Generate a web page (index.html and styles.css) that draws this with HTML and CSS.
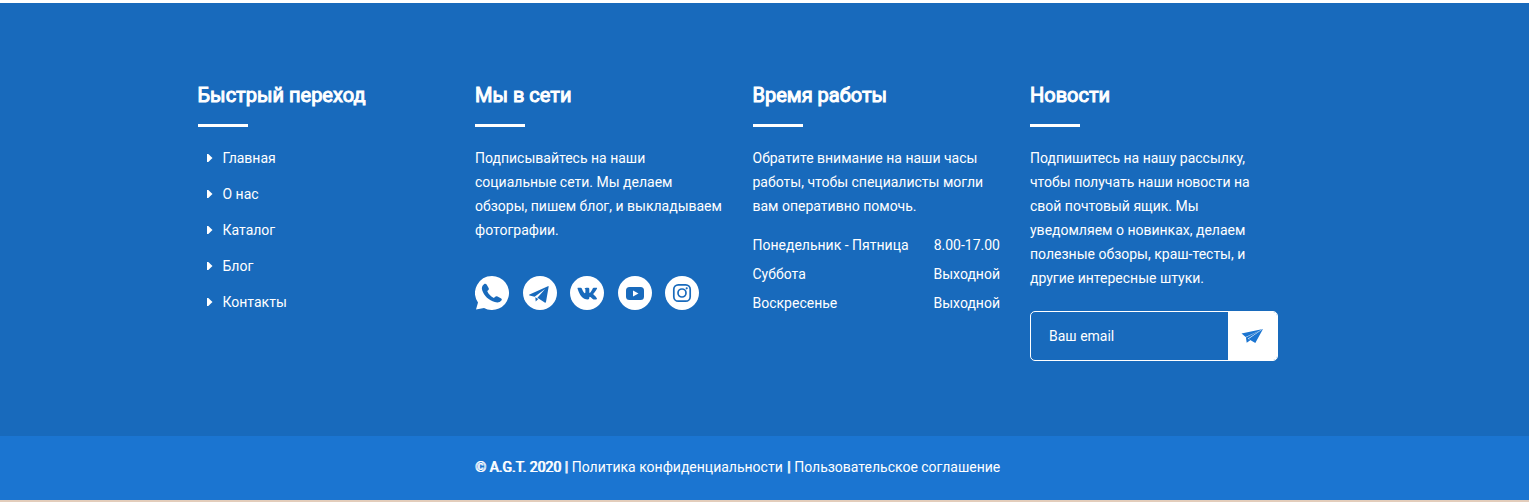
FILE: index.html
```html
<!DOCTYPE html>
<html lang="ru">
<head>
<meta charset="utf-8">
<title>A.G.T.</title>
<link rel="stylesheet" href="styles.css">
</head>
<body>
<footer class="footer">
  <div class="footer-main">
    <div class="columns">
      <section>
        <h2 class="title">Быстрый переход</h2>
        <ul class="links">
          <li><a href="#">Главная</a></li>
          <li><a href="#">О нас</a></li>
          <li><a href="#">Каталог</a></li>
          <li><a href="#">Блог</a></li>
          <li><a href="#">Контакты</a></li>
        </ul>
      </section>
      <section>
        <h2 class="title">Мы в сети</h2>
        <p class="text">Подписывайтесь на наши социальные сети. Мы делаем обзоры, пишем блог, и выкладываем фотографии.</p>
        <div class="social">
          <a href="#" aria-label="WhatsApp"><svg viewBox="0 0 34 34"><path fill="#fff" d="M17 0a17 17 0 1 1-8 32L1 33.500l2-7A17 17 0 0 1 17 0z"/><path fill="#186abc" d="M9 8.300c.9-.8 2-.6 2.600.3l2 3.300c.5.900.3 1.700-.4 2.300l-1 .9c1.200 3.100 3.600 5.500 6.700 7l1.300-1.300c.7-.7 1.500-.7 2.300-.3l3.300 1.700c1.100.6 1.300 1.500.6 2.400-1.500 1.900-3.800 2.300-6.600 1.500C14 24.500 9 20 7.200 14.300c-.7-2.400-.3-4.400 1.800-6z"/></svg></a>
          <a href="#" aria-label="Telegram"><svg viewBox="0 0 34 34"><circle cx="17" cy="17" r="17" fill="#fff"/><path fill="#186abc" d="M24.900 10.200 6.500 18.400c-.7.400-.6.800.1 1l5 1.300 10.500-7.600-7.700 8.600 7.300 4.800c.7.400 1.100.1 1.300-.6l2.600-15c.1-.8-.2-1-.7-.7zM12.300 21.300l.4 4.200 2.600-2.400z"/></svg></a>
          <a href="#" aria-label="ВКонтакте"><svg viewBox="0 0 34 34"><circle cx="17" cy="17" r="17" fill="#fff"/><path fill="#186abc" d="M8.200 11.700h2.600c.5 0 .8.300 1 .8 1 2.600 2.200 4.700 3 4.700.5 0 .6-.5.600-1.200v-2.200c0-.8-.4-1-.9-1.300.5-.7 1.400-.8 2.800-.8 1.600 0 2 .4 2 1.500v3c0 .7.300.9.700.6 1.100-.9 2-2.600 2.700-4.200.2-.6.500-.9 1.100-.9h2.500c.8 0 1 .4.600 1.100-.8 1.800-2.200 3.300-3.300 4.800-.4.500-.4.700.1 1.200 1.100 1 2.400 2.100 3.100 3.400.4.700.1 1.200-.7 1.200h-2.600c-.6 0-1-.3-1.400-.8l-1.300-1.300c-.9-.9-1.500-.8-1.500.4 0 1.200-.4 1.700-1.400 1.700-5.400 0-8.300-4.300-10.300-10.700-.2-.6 0-1 .6-1z"/></svg></a>
          <a href="#" aria-label="YouTube"><svg viewBox="0 0 34 34"><circle cx="17" cy="17" r="17" fill="#fff"/><rect x="8" y="11" width="18" height="13" rx="3.500" fill="#186abc"/><path fill="#fff" d="m15 14.500 5.500 3-5.500 3z"/></svg></a>
          <a href="#" aria-label="Instagram"><svg viewBox="0 0 34 34"><circle cx="17" cy="17" r="17" fill="#fff"/><g fill="none" stroke="#186abc" stroke-width="1.700"><rect x="8.800" y="8.800" width="16.400" height="16.400" rx="4.500"/><circle cx="17" cy="17" r="4"/></g><circle cx="21.700" cy="12.300" r="1.100" fill="#186abc"/></svg></a>
        </div>
      </section>
      <section>
        <h2 class="title">Время работы</h2>
        <p class="text">Обратите внимание на наши часы работы, чтобы специалисты могли вам оперативно помочь.</p>
        <table class="hours">
          <tr><th scope="row">Понедельник - Пятница</th><td>8.00-17.00</td></tr>
          <tr><th scope="row">Суббота</th><td>Выходной</td></tr>
          <tr><th scope="row">Воскресенье</th><td>Выходной</td></tr>
        </table>
      </section>
      <section>
        <h2 class="title">Новости</h2>
        <p class="text">Подпишитесь на нашу рассылку, чтобы получать наши новости на свой почтовый ящик. Мы уведомляем о новинках, делаем полезные обзоры, краш-тесты, и другие интересные штуки.</p>
        <form class="subscribe">
          <input type="email" placeholder="Ваш email" aria-label="Ваш email">
          <button type="button" aria-label="Подписаться"><svg viewBox="0 0 22 16"><path fill="#1b75d1" d="M22 1 .5 5.500l4.200 3.600zM22 1 7.500 11l6.800 4zM4.900 9.400l.8 5.400 3.600-2.600-2.600-1.400L20 2z"/></svg></button>
        </form>
      </section>
    </div>
  </div>
  <div class="footer-bottom">
    <b>© A.G.T. 2020 |</b>
    <a href="#">Политика конфиденциальности</a>
    <b>|</b>
    <a href="#">Пользовательское соглашение</a>
  </div>
</footer>
</body>
</html>
```
FILE: styles.css
```css
* {
  box-sizing: border-box;
}

body {
  margin: 0;
  background: #fff;
  font: 14px/24px Roboto, sans-serif;
  color: #fff;
}

a {
  color: inherit;
  text-decoration: none;
}

.footer {
  border-top: 3px solid #fff;
  border-bottom: 2px solid #e3cdbb;
}

.footer-main {
  padding: 80px 54px 75px 0;
  background: #186abc;
}

.columns {
  display: grid;
  grid-template-columns: repeat(4, minmax(0, 1fr));
  gap: 30px;
  max-width: 1080px;
  margin: 0 auto;
}

.title {
  margin: 0 0 19px;
  font-size: 20px;
  line-height: 24px;
  font-weight: 400;
  -webkit-text-stroke: 1px #fff;
}

.title::after {
  content: "";
  display: block;
  width: 50px;
  height: 3px;
  margin-top: 17px;
  background: #fff;
}

.links {
  display: grid;
  gap: 12px;
  margin: 0;
  padding: 0;
  list-style: none;
}

.links li {
  display: flex;
  align-items: center;
  gap: 10px;
  padding-left: 9px;
}

.links li::before {
  content: "";
  width: 6px;
  height: 8px;
  background: #fff;
  clip-path: polygon(0 0, 30% 0, 100% 50%, 30% 100%, 0 100%);
}

.text {
  margin: 0;
}

.social {
  display: flex;
  justify-content: space-between;
  max-width: 224px;
  margin-top: 34px;
}

.social a,
.social svg {
  display: block;
  width: 34px;
  height: 34px;
}

.hours {
  width: 100%;
  margin-top: 12px;
  border-collapse: collapse;
}

.hours th,
.hours td {
  height: 29px;
  padding: 0;
  font-weight: 400;
  text-align: left;
  white-space: nowrap;
}

.hours td {
  text-align: right;
}

.subscribe {
  display: flex;
  height: 50px;
  margin-top: 21px;
  border: 1px solid #fff;
  border-radius: 5px;
  overflow: hidden;
}

.subscribe input {
  flex: 1;
  min-width: 0;
  padding: 0 18px;
  border: 0;
  background: transparent;
  font: inherit;
  color: #fff;
}

.subscribe input::placeholder {
  color: #fff;
  opacity: 1;
}

.subscribe button {
  display: flex;
  align-items: center;
  justify-content: center;
  width: 49px;
  padding: 0;
  border: 0;
  background: #fff;
}

.subscribe svg {
  width: 22px;
  height: 16px;
}

.footer-bottom {
  display: flex;
  justify-content: center;
  gap: 4px;
  padding: 19px 54px 21px 0;
  background: #1b75d1;
}

.footer-bottom b {
  font-weight: 400;
  text-shadow: 1px 0 #fff;
}
```
